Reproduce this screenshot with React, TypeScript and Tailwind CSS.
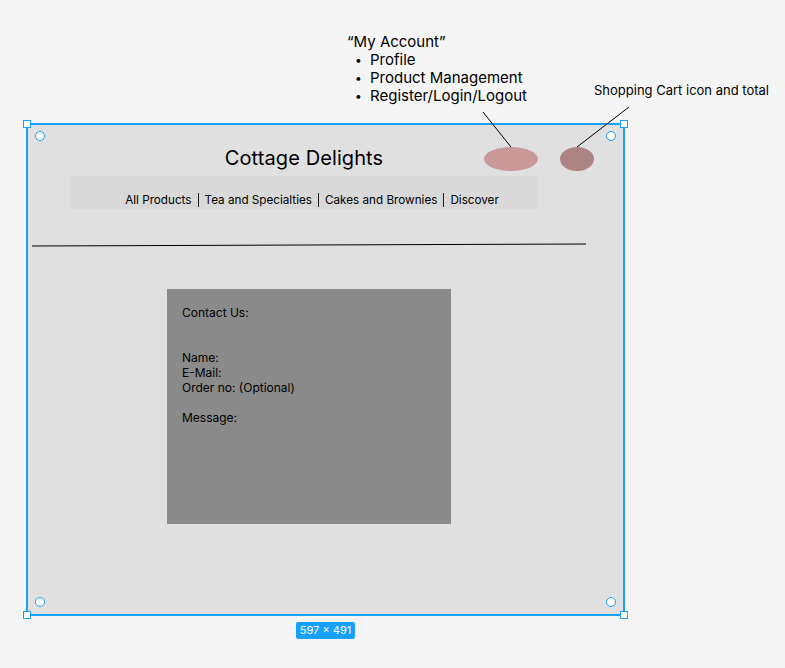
import React from 'react';

const navItems = ['All Products', 'Tea and Specialties', 'Cakes and Brownies', 'Discover'];
const accountItems = ['Profile', 'Product Management', 'Register/Login/Logout'];

function Handle({ className }: { className: string }) {
  return <div className={`absolute w-[8px] h-[8px] bg-white border border-[#18a0fb] ${className}`} />;
}

function Dot({ className }: { className: string }) {
  return <div className={`absolute w-[10px] h-[10px] rounded-full bg-white border-[1.5px] border-[#18a0fb] ${className}`} />;
}

export default function App() {
  return (
    <div
      className="relative w-[785px] h-[668px] bg-[#f5f5f5] text-black overflow-hidden"
      style={{ fontFamily: 'Inter, "Noto Sans", sans-serif' }}
    >
      {/* annotations */}
      <div className="flex items-start h-[124px]">
        <div className="ml-[347px] mt-[33px] text-[15px] leading-[18px]">
          <p>“My Account”</p>
          <ul>
            {accountItems.map((t) => (
              <li key={t} className="flex items-center">
                <span className="w-[23px] pl-[8px] text-[12px]">•</span>
                <span>{t}</span>
              </li>
            ))}
          </ul>
        </div>
        <p className="ml-auto mr-[16px] mt-[83px] text-[13px] leading-[15px] whitespace-nowrap">
          Shopping Cart icon and total
        </p>
      </div>

      {/* frame */}
      <div className="ml-[27px] w-[597px] h-[491px] bg-[#e0e0e0] relative">
        <div className="flex items-start">
          <div className="ml-[43px] w-[468px] pt-[22px]">
            <div className="grid grid-cols-[54px_1fr_54px] items-center">
              <span />
              <h1 className="text-center text-[20px] leading-[24px] tracking-[0.1px]">Cottage Delights</h1>
              <div className="w-[54px] h-[24px] rounded-[50%] bg-[#c99999] translate-y-[1px]" />
            </div>
            <nav className="mt-[6px] h-[33px] bg-[#d9d9d9] flex items-end justify-center gap-[6px] pb-[1px] pl-[16px] text-[11.7px] leading-[16px]">
              {navItems.map((n, i) => (
                <React.Fragment key={n}>
                  {i > 0 && <span className="w-px h-[14px] bg-[#222] mb-[1px]" />}
                  <span>{n}</span>
                </React.Fragment>
              ))}
            </nav>
          </div>
          <div className="ml-[22px] mt-[23px] w-[34px] h-[24px] rounded-[50%] bg-[#ad8484]" />
        </div>

        <svg className="block ml-[5px] mt-[34px]" width="556" height="4">
          <line x1="0" y1="3" x2="554" y2="1" stroke="#000" strokeWidth="1" />
        </svg>

        <div className="ml-[140px] mt-[42px] w-[284px] h-[235px] bg-[#8a8a8a] px-[15px] pt-[16px] text-[12px] leading-[15px]">
          <p>Contact Us:</p>
          <p className="mt-[30px]">Name:</p>
          <p>E-Mail:</p>
          <p>Order no: (Optional)</p>
          <p className="mt-[15px]">Message:</p>
        </div>

        {/* selection overlay */}
        <div className="absolute -inset-[1px] border-2 border-[#18a0fb] pointer-events-none" />
        <Handle className="-left-[4px] -top-[4px]" />
        <Handle className="-right-[4px] -top-[4px]" />
        <Handle className="-left-[4px] -bottom-[4px]" />
        <Handle className="-right-[4px] -bottom-[4px]" />
        <Dot className="left-[8px] top-[7px]" />
        <Dot className="right-[8px] top-[7px]" />
        <Dot className="left-[8px] bottom-[8px]" />
        <Dot className="right-[8px] bottom-[8px]" />
      </div>

      <div className="mt-[7px] ml-[296px] w-[59px] h-[17px] rounded-[2px] bg-[#18a0fb] text-white text-[11px] leading-[17px] text-center">
        597 × 491
      </div>

      {/* leader lines */}
      <svg className="absolute inset-0 pointer-events-none" width="785" height="668">
        <line x1="483" y1="112" x2="511" y2="147" stroke="#000" strokeWidth="1" />
        <line x1="629" y1="107" x2="577" y2="147" stroke="#000" strokeWidth="1" />
      </svg>
    </div>
  );
}
